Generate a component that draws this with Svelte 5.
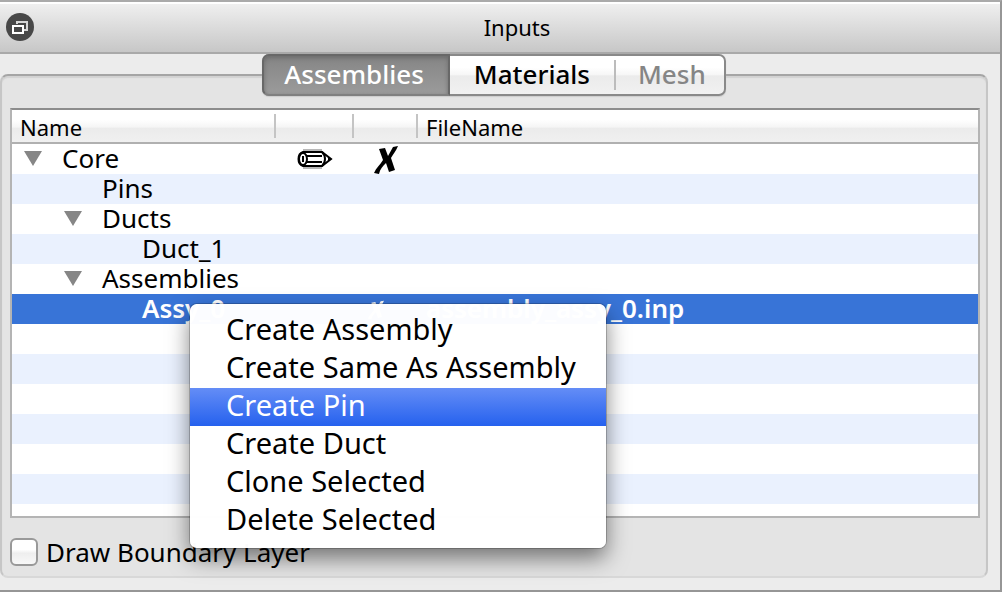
<script>
  let tab = $state('Assemblies');
  let selected = $state(5);
  let boundary = $state(false);
  let active = $state('Create Pin');

  const tabs = [
    { name: 'Assemblies' },
    { name: 'Materials' },
    { name: 'Mesh', disabled: true }
  ];

  const rows = [
    { name: 'Core', level: 0, open: true, pencil: true, cross: true },
    { name: 'Pins', level: 1 },
    { name: 'Ducts', level: 1, open: true },
    { name: 'Duct_1', level: 2 },
    { name: 'Assemblies', level: 1, open: true },
    { name: 'Assy_0', level: 2, cross: true, file: 'assembly_assy_0.inp' },
    {}, {}, {}, {}, {}, {}
  ];

  const actions = [
    'Create Assembly',
    'Create Same As Assembly',
    'Create Pin',
    'Create Duct',
    'Clone Selected',
    'Delete Selected'
  ];
</script>

<main class="dock">
  <header class="titlebar">
    <button class="float" aria-label="Float panel">
      <svg width="28" height="28" viewBox="0 0 28 28">
        <circle cx="14" cy="14" r="14" fill="#484848" />
        <path d="M11 11V9h10v8h-3" fill="none" stroke="#d8d8d8" stroke-width="2" />
        <rect x="7" y="13" width="10" height="7" fill="#484848" stroke="#fff" stroke-width="2" />
      </svg>
    </button>
    <h1>Inputs</h1>
  </header>

  <div class="content">
    <div class="tabs" role="tablist">
      {#each tabs as t}
        <button
          role="tab"
          class="tab"
          class:current={tab === t.name}
          aria-selected={tab === t.name}
          disabled={t.disabled}
          onclick={() => (tab = t.name)}>{t.name}</button>
      {/each}
    </div>

    <section class="panel">
      <div class="tree">
        <table>
          <colgroup>
            <col class="c-name" /><col class="c-edit" /><col class="c-mark" /><col />
          </colgroup>
          <thead>
            <tr><th>Name</th><th></th><th></th><th>FileName</th></tr>
          </thead>
          <tbody>
            {#each rows as row, i}
              <tr class:selected={selected === i} onclick={() => row.name && (selected = i)}>
                <td>
                  {#if row.name}
                    <div class="node level{row.level}">
                      {#if row.open}
                        <button class="toggle" aria-label="Collapse {row.name}">
                          <svg width="18" height="15" viewBox="0 0 18 15"><path d="M0 0h18L9 15z" fill="#868686" /></svg>
                        </button>
                      {:else}
                        <span class="toggle"></span>
                      {/if}
                      <span>{row.name}</span>
                    </div>
                  {/if}
                </td>
                <td class="mark">
                  {#if row.pencil}
                    <svg width="36" height="20" viewBox="0 0 36 20" fill="none" stroke="#000" stroke-width="2">
                      <path d="M6 1h19M6 19h19" stroke="#b8b8b8" />
                      <path d="M6 3h19l9 7-9 7H6C0 15 0 5 6 3z" />
                      <ellipse cx="6" cy="10" rx="4" ry="6" />
                      <path d="M9 7h16M9 13h16M25 3c4 4 4 10 0 14" />
                      <path d="M6 7v6" />
                      <path d="M31 8l4 2-4 2z" fill="#000" stroke="none" />
                    </svg>
                  {/if}
                </td>
                <td class="mark">
                  {#if row.cross}
                    <svg class:small={row.file} viewBox="0 0 24 28">
                      <path d="M5 3l6-1 3 8 5-9 5-1c-2 5-5 8-7 12l4 12-6 2-3-9C9 20 6 23 5 28L0 27c2-5 6-8 9-13z" fill="currentColor" />
                    </svg>
                  {/if}
                </td>
                <td class="file">{row.file ?? ''}</td>
              </tr>
            {/each}
          </tbody>
        </table>
      </div>

      <label class="check">
        <input type="checkbox" bind:checked={boundary} />
        Draw Boundary Layer
      </label>
    </section>
  </div>

  <div class="menu" role="menu">
    {#each actions as action}
      <button role="menuitem" class:active={active === action} onmouseenter={() => (active = action)}>{action}</button>
    {/each}
  </div>
</main>

<style>
  :global(body) {
    background: #fff;
    font-family: "Noto Sans", "Open Sans", sans-serif;
    font-size: 26px;
    color: #000;
  }
  .dock, .dock * { box-sizing: border-box; }
  .dock {
    position: relative;
    background: #ececec;
    border: 2px solid #969696;
    border-top-color: #aaa;
    border-left: 0;
  }
  button {
    font: inherit;
    color: inherit;
    border: 0;
    padding: 0;
    background: none;
  }
  .titlebar {
    display: flex;
    align-items: center;
    height: 52px;
    padding: 0 0 2px 6px;
    border-top: 2px solid #fff;
    border-bottom: 2px solid #a9a9a9;
    background: linear-gradient(#efefef, #c7c7c7);
  }
  .float svg { display: block; }
  h1 {
    flex: 1;
    margin: 0;
    font-size: 22px;
    line-height: 30px;
    font-weight: 400;
    text-align: center;
  }
  .content { padding: 0 12px 12px 0; }
  .tabs {
    position: relative;
    z-index: 1;
    display: flex;
    width: fit-content;
    height: 42px;
    margin: 0 auto;
    border: 2px solid #898989;
    border-radius: 7px;
    background: linear-gradient(#fff 30%, #f6f6f6 50%, #ebebeb 52%, #f1f1f1);
    box-shadow: 0 1px 1px #ccc;
  }
  .tab {
    position: relative;
    padding: 0 24px 2px;
    font-weight: 500;
    line-height: 36px;
  }
  .tab:last-child { padding-right: 18px; }
  .tab:disabled { color: #858585; }
  .tab:disabled::before {
    content: "";
    position: absolute;
    left: 0;
    top: 4px;
    bottom: 4px;
    width: 2px;
    background: #bcbcbc;
  }
  .tab.current {
    margin: -2px 0 -2px -2px;
    padding: 0 24px 2px 20px;
    color: #fff;
    border: 2px solid #686868;
    border-bottom-color: #808080;
    border-radius: 7px 0 0 7px;
    background: linear-gradient(#858585, #9b9b9b);
    box-shadow: inset 0 2px 4px #6c6c6c;
  }
  .panel {
    margin-top: -22px;
    padding: 32px 6px 10px 8px;
    border: 2px solid #c6c6c6;
    border-top-color: #a5a5a5;
    border-bottom-color: #d8d8d8;
    border-radius: 8px;
    background: #e4e4e4;
    box-shadow: inset 0 2px 1px #d2d2d2;
  }
  .tree {
    padding-bottom: 12px;
    border: 2px solid #b4b4b4;
    border-top-color: #8c8c8c;
    background: #fff;
  }
  table {
    width: 100%;
    table-layout: fixed;
    border-collapse: separate;
    border-spacing: 0;
  }
  .c-name { width: 264px; }
  .c-edit { width: 78px; }
  .c-mark { width: 64px; }
  th {
    position: relative;
    height: 34px;
    padding: 2px 0 0 8px;
    border-bottom: 2px solid #b0b0b0;
    background: linear-gradient(#fff 30%, #f5f5f5 54%, #ebebeb 56%, #f0f0f0);
    font-size: 22px;
    font-weight: 400;
    line-height: 30px;
    text-align: left;
  }
  th:not(:last-child)::after {
    content: "";
    position: absolute;
    right: 0;
    top: 4px;
    bottom: 4px;
    width: 2px;
    background: #c4c4c4;
  }
  td {
    height: 30px;
    padding: 0 0 2px;
    line-height: 28px;
    white-space: nowrap;
  }
  tbody tr:nth-child(even) { background: #eaf1fe; }
  tbody tr.selected {
    background: #3874d7;
    color: #fff;
    font-weight: 600;
  }
  .node { display: flex; align-items: center; gap: 20px; padding-left: 12px; }
  .level1 { padding-left: 52px; }
  .level2 { padding-left: 92px; }
  .toggle { display: block; width: 18px; }
  .toggle svg { display: block; }
  .mark svg { display: block; margin: 2px auto 0; }
  .mark + .mark { padding: 0; }
  .mark + .mark svg { width: 24px; height: 28px; }
  .mark + .mark svg.small { width: 16px; height: 20px; margin-right: 34px; }
  .file { padding-left: 8px; }
  .check {
    display: flex;
    width: fit-content;
    align-items: center;
    gap: 8px;
    margin-top: 20px;
    line-height: 28px;
  }
  .check input {
    appearance: none;
    width: 28px;
    height: 28px;
    margin: 0;
    border: 2px solid #999;
    border-radius: 6px;
    background: linear-gradient(#fff 40%, #eee 55%, #f8f8f8);
  }
  .check input:checked { background: #3874d7; }
  .menu {
    position: absolute;
    z-index: 2;
    left: 190px;
    top: 302px;
    display: flex;
    flex-direction: column;
    padding: 8px 0;
    border-radius: 7px;
    background: rgba(255, 255, 255, 0.98);
    box-shadow: 0 0 0 1px rgba(0, 0, 0, 0.2), 0 10px 22px rgba(0, 0, 0, 0.5);
    font-size: 29px;
  }
  .menu button {
    padding: 0 30px 4px 36px;
    line-height: 34px;
    text-align: left;
  }
  .menu button.active {
    color: #fff;
    background: linear-gradient(#648df6, #2561ee);
  }
</style>
